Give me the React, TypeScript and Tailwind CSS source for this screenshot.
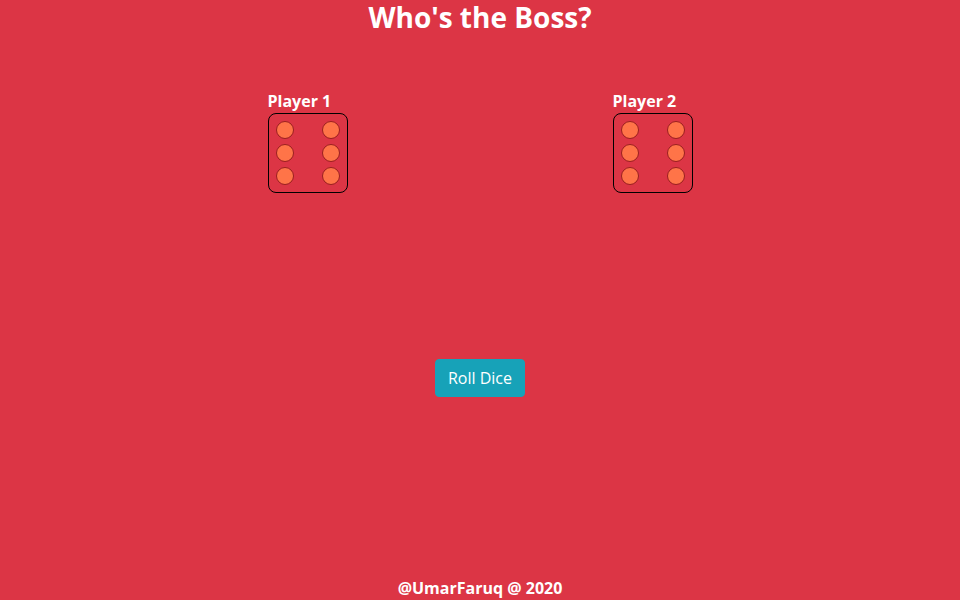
import React from 'react';

const Die: React.FC = () => {
  const rows = [0, 1, 2];
  return (
    <div className="w-[80px] h-[80px] rounded-[8px] border border-black p-[7px] flex flex-col justify-between">
      {rows.map((r) => (
        <div key={r} className="flex justify-between">
          <span className="block w-[18px] h-[18px] rounded-full bg-[#ff7448] border border-[#9a1f1f]"></span>
          <span className="block w-[18px] h-[18px] rounded-full bg-[#ff7448] border border-[#9a1f1f]"></span>
        </div>
      ))}
    </div>
  );
};

const Player: React.FC<{ name: string }> = ({ name }) => (
  <div className="flex-1 flex justify-center">
    <div className="w-[80px]">
      <div className="text-[16px] leading-[24px] font-bold text-white whitespace-nowrap">{name}</div>
      <Die />
    </div>
  </div>
);

export default function App() {
  return (
    <div
      className="h-screen flex flex-col bg-[#dc3545] text-white"
      style={{ fontFamily: '"Open Sans", "Noto Sans", sans-serif' }}
    >
      <h1 className="text-[28px] leading-[34px] font-bold text-center">Who's the Boss?</h1>

      <div className="w-[660px] mx-auto mt-[55px] flex gap-[30px]">
        <Player name="Player 1" />
        <Player name="Player 2" />
      </div>

      <div className="flex justify-center mt-[166px]">
        <button className="h-[38px] px-[12px] rounded-[4px] border border-[#17a2b8] bg-[#17a2b8] text-white text-[16px]">
          Roll Dice
        </button>
      </div>

      <footer className="mt-auto text-center text-[16px] leading-[24px] font-bold">@UmarFaruq @ 2020</footer>
    </div>
  );
}
